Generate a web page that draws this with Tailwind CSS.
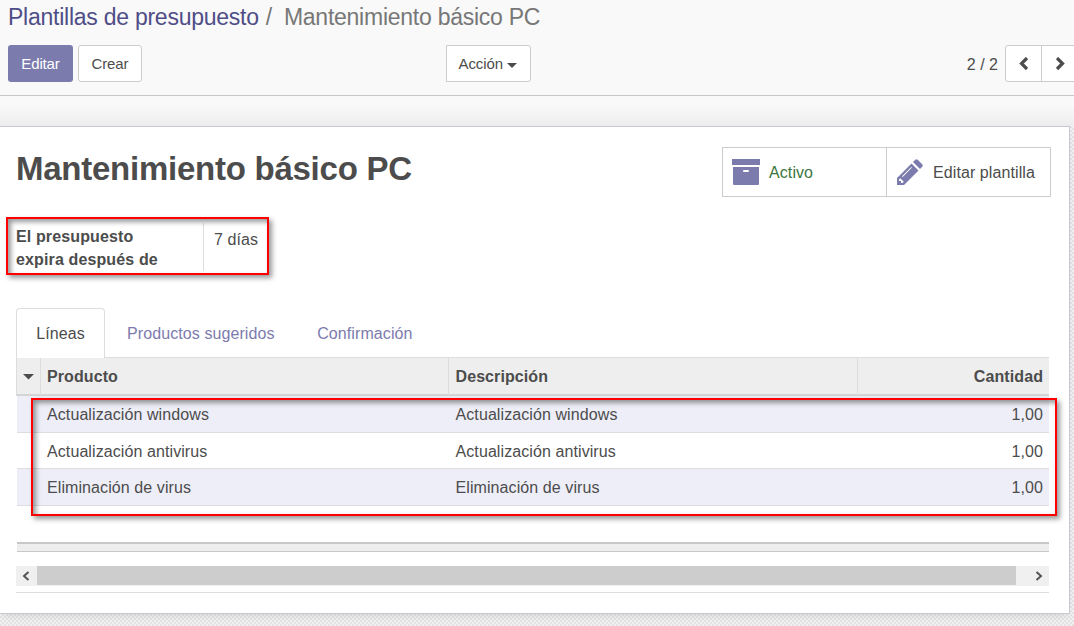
<!DOCTYPE html>
<html lang="es">
<head>
<meta charset="utf-8">
<title>Plantillas de presupuesto</title>
<script src="https://cdn.jsdelivr.net/npm/@tailwindcss/browser@4"></script>
</head>
<body class="relative flex h-[626px] w-[1074px] flex-col overflow-hidden bg-[#f9f9f9] font-['Liberation_Sans',Arial,sans-serif] text-[16px] text-[#4c4c4c]">
<header class="flex h-24 shrink-0 flex-col border-b border-[#c8c8cc]">
  <h2 class="flex h-[45px] pt-[3px] pl-2 text-[23px] leading-7 tracking-[-0.25px] whitespace-pre text-[#777]"><a class="text-[#4f4d87]">Plantillas de presupuesto</a><span class="pl-[7px]">/</span><span class="pl-[12px]">Mantenimiento básico PC</span></h2>
  <div class="flex h-[37px] w-[1080px] text-[15px]">
    <button class="ml-2 w-[65px] rounded-[3px] bg-[#7c7bad] pt-[2px] tracking-[-0.15px] text-white">Editar</button>
    <button class="ml-[5px] w-16 rounded-[3px] border border-[#ccc] bg-white pt-[2px] tracking-[-0.1px]">Crear</button>
    <button class="ml-[304px] flex w-[85px] items-center rounded-r-[3px] border border-[#ccc] bg-white pt-[2px] pl-[11.5px] tracking-[-0.1px]">Acción<svg class="mt-[1px] ml-1" width="10" height="5"><path d="M0 0H10L5 5Z" fill="#4c4c4c"/></svg></button>
    <span class="ml-auto self-center pt-[2px] text-[16px]">2 / 2</span>
    <div class="ml-[7px] flex w-[75px] rounded-l-[3px] border border-[#ccc] bg-white">
      <button class="flex w-9 items-center justify-center border-r border-[#ccc]"><svg width="12" height="14" viewBox="0 0 12 14"><path d="M9 1L3.5 6.5L9 12" fill="none" stroke="#4c4c4c" stroke-width="3.2"/></svg></button>
      <button class="flex w-9 items-center justify-center"><svg width="12" height="14" viewBox="0 0 12 14"><path d="M3 1L8.5 6.5L3 12" fill="none" stroke="#4c4c4c" stroke-width="3.2"/></svg></button>
    </div>
  </div>
</header>
<div class="h-[30px] shrink-0 bg-linear-to-b from-[#f9f9f9] from-30% to-[#ededed]"></div>
<main class="flex-1 bg-[#eeeeee] bg-[conic-gradient(#e3e3e3_25%,#f0f0f0_0_50%,#e3e3e3_0_75%,#f0f0f0_0)] bg-size-[4px_4px] tracking-[0.09px]">
  <section class="flex h-[488px] w-[1070px] flex-col border-y border-r border-[#c8c8d3] bg-white pr-5 pl-4 shadow-[0_4px_8px_-4px_rgba(0,0,0,0.15)]">
    <div class="flex h-[91px] pt-5">
      <h1 class="pt-[2px] text-[33px] leading-10 font-bold tracking-[-0.25px] whitespace-nowrap">Mantenimiento básico PC</h1>
      <div class="mr-[-2px] ml-auto flex h-[50px] w-[329px] border border-[#ccc]">
        <button class="flex w-[164px] items-center border-r border-[#ccc] pl-[9px] text-[#3c763d]"><svg class="mr-[9px]" width="28" height="26" viewBox="0 0 28 26"><path fill="#7c7bad" fill-rule="evenodd" d="M0 0H28V6H0ZM1 8H27V25a1 1 0 0 1-1 1H2a1 1 0 0 1-1-1ZM12 11a1 1 0 0 0 0 2H16a1 1 0 0 0 0-2Z"/></svg><span class="pt-[2px]">Activo</span></button>
        <button class="flex items-center pl-[10px] whitespace-nowrap"><svg class="mr-[10px]" width="26" height="26" viewBox="0 0 26 26"><path fill="#7c7bad" d="M0 19L14.5 4.5L21.5 11.5L7 26H0ZM16 3L18.3.8Q19.5-.4 20.7.8L25.2 5.3Q26.4 6.5 25.2 7.7L23 10Z"/><path d="M2 20.5V22H4V24H5.5L6.8 22.7L3.3 19.2ZM5 17.2L14.3 7.9L15 8.6L5.7 17.9Z" fill="#fff"/></svg><span class="pt-[2px]">Editar plantilla</span></button>
      </div>
    </div>
    <div class="flex h-[90px] pt-[5px]">
      <div class="h-[48px] w-[188px] border-r border-[#ddd] pt-[2px] leading-[23px] font-bold tracking-[0.13px]">El presupuesto<br>expira después de</div>
      <div class="pt-[5px] pl-[10px] leading-[23px]">7 días</div>
    </div>
    <nav class="flex h-[50px] shrink-0 text-[#7c7bad]">
      <a class="flex w-[89px] items-center justify-center rounded-t-[4px] border border-b-0 border-[#ddd] text-[#4c4c4c]">Líneas</a>
      <div class="flex flex-1 items-center border-b border-[#ddd] pt-[2px] pl-[22px]"><a>Productos sugeridos</a><a class="pl-[42.6px]">Confirmación</a></div>
    </nav>
    <div class="ml-px grid grid-cols-[24px_408px_409px_191px] grid-rows-[38px_37px_36px_37px]">
      <div class="-ml-px flex items-center border-r border-b-2 border-l border-[#ddd] border-b-[#d4d4d4] bg-[#eee] pt-[2px] pl-[6px]"><svg width="11" height="6"><path d="M0 0H11L5.5 5.5Z" fill="#4c4c4c"/></svg></div>
      <div class="flex items-center border-r border-b-2 border-r-[#ddd] border-b-[#d4d4d4] bg-[#eee] pt-[2px] pl-[6px] font-bold">Producto</div>
      <div class="flex items-center border-r border-b-2 border-r-[#ddd] border-b-[#d4d4d4] bg-[#eee] pt-[2px] pl-[6.5px] font-bold">Descripción</div>
      <div class="flex items-center justify-end border-b-2 border-[#d4d4d4] bg-[#eee] pt-[2px] pr-[6px] font-bold">Cantidad</div>
      <div class="col-span-4 grid grid-cols-subgrid items-center border-b border-[#ddd] bg-[#eeeef8] pt-[2px]"><span></span><span class="pl-[6px]">Actualización windows</span><span class="pl-[6.5px]">Actualización windows</span><span class="pr-[6px] text-right">1,00</span></div>
      <div class="col-span-4 grid grid-cols-subgrid items-center border-b border-[#ddd] pt-[2px]"><span></span><span class="pl-[6px]">Actualización antivirus</span><span class="pl-[6.5px]">Actualización antivirus</span><span class="pr-[6px] text-right">1,00</span></div>
      <div class="col-span-4 grid grid-cols-subgrid items-center border-b border-[#ddd] bg-[#eeeef8] pt-[2px]"><span></span><span class="pl-[6px]">Eliminación de virus</span><span class="pl-[6.5px]">Eliminación de virus</span><span class="pr-[6px] text-right">1,00</span></div>
    </div>
    <div class="mt-9 ml-px h-[10px] border-t-2 border-b border-[#c8c8c8] bg-[#eee]"></div>
    <div class="mt-[14px] flex h-5 items-center bg-[#f0f0f0]">
      <span class="flex w-[21px] justify-center pr-[2px] pb-px"><svg width="8" height="10"><path d="M6.5 1L2 5L6.5 9" fill="none" stroke="#555" stroke-width="2"/></svg></span>
      <span class="mb-px h-[19px] w-[979px] bg-[#cdcdcd]"></span>
      <span class="ml-auto pr-[6px] pb-px"><svg width="8" height="10"><path d="M1.5 1L6 5L1.5 9" fill="none" stroke="#555" stroke-width="2"/></svg></span>
    </div>
    <div class="mt-[6px] h-px bg-[#ddd]"></div>
  </section>
</main>
<div class="pointer-events-none absolute top-[217px] left-[6px] h-[58px] w-[263px] border-2 border-[#f00] shadow-[3px_3px_5px_rgba(0,0,0,.4),inset_3px_3px_5px_rgba(0,0,0,.4)]"></div>
<div class="pointer-events-none absolute top-[398px] left-[31px] h-[118px] w-[1026px] border-2 border-[#f00] shadow-[3px_3px_5px_rgba(0,0,0,.4),inset_3px_3px_5px_rgba(0,0,0,.4)]"></div>
</body>
</html>
